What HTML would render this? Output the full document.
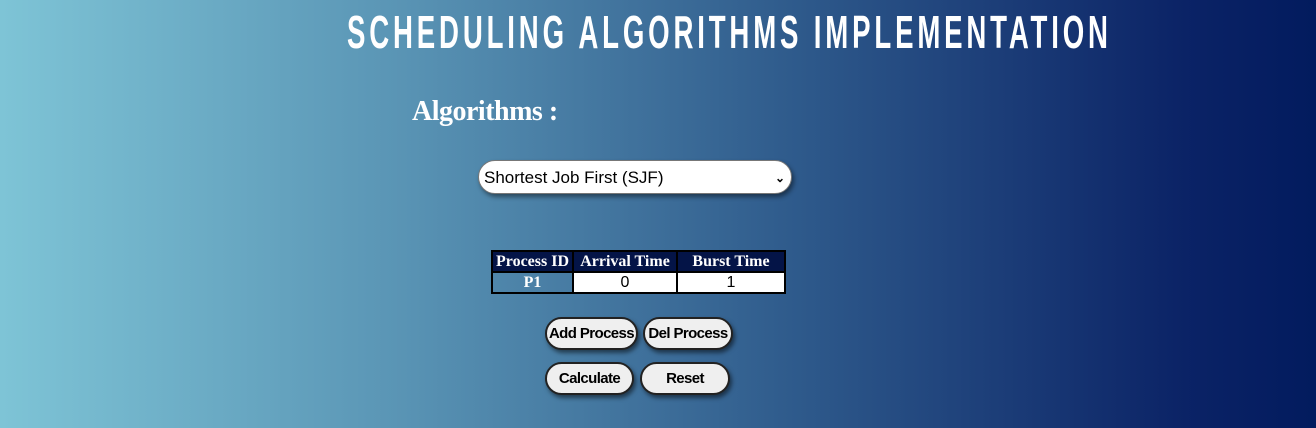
<!DOCTYPE html>
<html><head><style>
html,body{margin:0;padding:0;}
body{width:1316px;height:428px;overflow:hidden;position:relative;background:linear-gradient(to right,#7ec4d6 0%,#5a95b5 30%,#2f5b8c 60%,#0b2366 90%,#021b5e 100%);font-family:"Liberation Serif",serif;}
.title{position:absolute;left:347px;top:10px;width:1272px;transform:scaleX(0.6);transform-origin:0 0;color:#fff;font-family:"Liberation Sans",sans-serif;font-weight:bold;font-size:46px;letter-spacing:6.4px;white-space:nowrap;line-height:44px;}
.alg{position:absolute;left:412px;top:96px;color:#fff;font-weight:bold;font-size:28px;letter-spacing:-0.5px;}
.sel{position:absolute;left:478px;top:160px;width:314px;height:34px;background:#fff;border:1px solid #777;border-radius:17px;box-shadow:2px 3px 5px rgba(0,0,0,.45);font-family:"Liberation Sans",sans-serif;font-size:17px;line-height:34px;box-sizing:border-box;padding-left:5px;color:#000;}
.sel .ar{position:absolute;right:6px;top:0;font-size:12px;font-weight:bold;}
table{position:absolute;left:491px;top:250px;border-collapse:collapse;border:2px solid #000;}
td,th{padding:0;border:2px solid #000;font-size:16px;height:19px;white-space:nowrap;}
th{background:#041447;color:#fff;}
td{text-align:center;}
.p{color:#fff;font-weight:bold;}
.in{background:#fff;font-family:"Liberation Sans",sans-serif;font-size:16px;}
.btn{position:absolute;height:33px;box-sizing:border-box;border:2px solid #222;border-radius:17px;background:#efefef;box-shadow:2px 3px 4px rgba(0,0,0,.5);font-family:"Liberation Sans",sans-serif;font-weight:bold;font-size:15px;line-height:29px;text-align:center;color:#000;letter-spacing:-0.6px;}
</style></head><body>
<div class="title">SCHEDULING ALGORITHMS IMPLEMENTATION</div>
<div class="alg">Algorithms :</div>
<div class="sel">Shortest Job First (SJF)<span class="ar">&#8964;</span></div>
<table>
<tr><th style="width:79px">Process ID</th><th style="width:102px">Arrival Time</th><th style="width:106px">Burst Time</th></tr>
<tr><td class="p">P1</td><td class="in">0</td><td class="in">1</td></tr>
</table>
<div class="btn" style="left:545px;top:317px;width:93px">Add Process</div>
<div class="btn" style="left:643px;top:317px;width:90px">Del Process</div>
<div class="btn" style="left:545px;top:362px;width:89px">Calculate</div>
<div class="btn" style="left:640px;top:362px;width:90px">Reset</div>
</body></html>
